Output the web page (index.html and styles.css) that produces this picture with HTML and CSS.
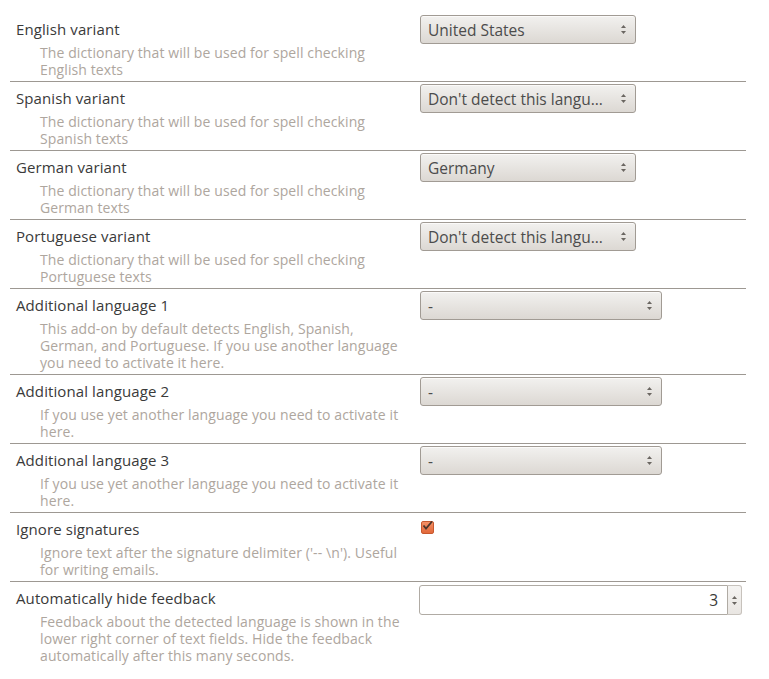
FILE: index.html
```html
<!DOCTYPE html>
<html lang="en">
<head>
<meta charset="utf-8">
<title>Language preferences</title>
<link rel="stylesheet" href="styles.css">
</head>
<body>
<div class="prefs">

  <div class="row">
    <div class="label">
      <div class="title">English variant</div>
      <div class="desc">The dictionary that will be used for spell checking English texts</div>
    </div>
    <div class="control">
      <div class="select">
        <span class="value">United States</span>
        <svg class="arrows" width="7" height="11" viewBox="0 0 7 11"><path d="M3.5 1 L6 4 L1 4 Z"/><path d="M1 7 L6 7 L3.5 10 Z"/></svg>
      </div>
    </div>
  </div>

  <div class="row">
    <div class="label">
      <div class="title">Spanish variant</div>
      <div class="desc">The dictionary that will be used for spell checking Spanish texts</div>
    </div>
    <div class="control">
      <div class="select">
        <span class="value">Don't detect this langu…</span>
        <svg class="arrows" width="7" height="11" viewBox="0 0 7 11"><path d="M3.5 1 L6 4 L1 4 Z"/><path d="M1 7 L6 7 L3.5 10 Z"/></svg>
      </div>
    </div>
  </div>

  <div class="row">
    <div class="label">
      <div class="title">German variant</div>
      <div class="desc">The dictionary that will be used for spell checking German texts</div>
    </div>
    <div class="control">
      <div class="select">
        <span class="value">Germany</span>
        <svg class="arrows" width="7" height="11" viewBox="0 0 7 11"><path d="M3.5 1 L6 4 L1 4 Z"/><path d="M1 7 L6 7 L3.5 10 Z"/></svg>
      </div>
    </div>
  </div>

  <div class="row">
    <div class="label">
      <div class="title">Portuguese variant</div>
      <div class="desc">The dictionary that will be used for spell checking Portuguese texts</div>
    </div>
    <div class="control">
      <div class="select">
        <span class="value">Don't detect this langu…</span>
        <svg class="arrows" width="7" height="11" viewBox="0 0 7 11"><path d="M3.5 1 L6 4 L1 4 Z"/><path d="M1 7 L6 7 L3.5 10 Z"/></svg>
      </div>
    </div>
  </div>

  <div class="row">
    <div class="label">
      <div class="title">Additional language 1</div>
      <div class="desc">This add-on by default detects English, Spanish, German, and Portuguese. If you use another language you need to activate it here.</div>
    </div>
    <div class="control">
      <div class="select wide">
        <span class="value">-</span>
        <svg class="arrows" width="7" height="11" viewBox="0 0 7 11"><path d="M3.5 1 L6 4 L1 4 Z"/><path d="M1 7 L6 7 L3.5 10 Z"/></svg>
      </div>
    </div>
  </div>

  <div class="row">
    <div class="label">
      <div class="title">Additional language 2</div>
      <div class="desc">If you use yet another language you need to activate it here.</div>
    </div>
    <div class="control">
      <div class="select wide">
        <span class="value">-</span>
        <svg class="arrows" width="7" height="11" viewBox="0 0 7 11"><path d="M3.5 1 L6 4 L1 4 Z"/><path d="M1 7 L6 7 L3.5 10 Z"/></svg>
      </div>
    </div>
  </div>

  <div class="row">
    <div class="label">
      <div class="title">Additional language 3</div>
      <div class="desc">If you use yet another language you need to activate it here.</div>
    </div>
    <div class="control">
      <div class="select wide">
        <span class="value">-</span>
        <svg class="arrows" width="7" height="11" viewBox="0 0 7 11"><path d="M3.5 1 L6 4 L1 4 Z"/><path d="M1 7 L6 7 L3.5 10 Z"/></svg>
      </div>
    </div>
  </div>

  <div class="row">
    <div class="label">
      <div class="title">Ignore signatures</div>
      <div class="desc">Ignore text after the signature delimiter ('-- \n'). Useful for writing emails.</div>
    </div>
    <div class="control">
      <span class="checkbox">
        <svg width="13" height="12" viewBox="0 0 13 12"><path d="M2.5 5.5 L5 8.5 L11 1.5" fill="none" stroke="#4a352c" stroke-width="1.8"/></svg>
      </span>
    </div>
  </div>

  <div class="row last">
    <div class="label">
      <div class="title">Automatically hide feedback</div>
      <div class="desc">Feedback about the detected language is shown in the lower right corner of text fields. Hide the feedback automatically after this many seconds.</div>
    </div>
    <div class="control">
      <div class="number">
        <div class="num-field">3</div>
        <div class="spin">
          <svg width="7" height="11" viewBox="0 0 7 11"><path d="M3.5 1 L6 4 L1 4 Z"/><path d="M1 7 L6 7 L3.5 10 Z"/></svg>
        </div>
      </div>
    </div>
  </div>

</div>
</body>
</html>
```
FILE: styles.css
```css
html, body {
  margin: 0;
  padding: 0;
  background: #ffffff;
}

body {
  font-family: "Open Sans", "Noto Sans", "DejaVu Sans", sans-serif;
}

.prefs {
  width: 736px;
  padding: 13px 0 0 10px;
}

.row {
  display: grid;
  grid-template-columns: 404px 1fr;
  padding: 2px 0 3px 6px;
  border-bottom: 1px solid #9d9892;
}

.row.last {
  border-bottom: none;
}

.title {
  font-size: 15px;
  letter-spacing: 0.1px;
  line-height: 29px;
  color: #3a3a3a;
}

.desc {
  font-size: 14px;
  letter-spacing: 0.1px;
  line-height: 17px;
  color: #aea69e;
  padding-left: 24px;
  width: 368px;
}

.control {
  display: flex;
  align-items: flex-start;
}

.select {
  box-sizing: border-box;
  width: 216px;
  height: 29px;
  display: flex;
  align-items: center;
  justify-content: space-between;
  padding: 0 8px 0 7px;
  border: 1px solid #a19b94;
  border-radius: 3px;
  background: linear-gradient(#f2f1ef, #dcd8d3);
  box-shadow: inset 0 1px 0 #fbfaf9;
  color: #4c4c4c;
  font-size: 15.5px;
  white-space: nowrap;
}

.select.wide {
  width: 242px;
}

.select .value {
  overflow: hidden;
}

.arrows path,
.spin path {
  fill: #6a6661;
}

.checkbox {
  position: relative;
  box-sizing: border-box;
  width: 13px;
  height: 13px;
  margin: 6px 0 0 1px;
  border: 1px solid #c8582e;
  border-radius: 2px;
  background: linear-gradient(#f39066, #e2683a);
}

.checkbox svg {
  position: absolute;
  left: -1px;
  top: -2px;
}

.number {
  display: flex;
  margin-top: 1px;
  margin-left: -1px;
}

.num-field {
  box-sizing: border-box;
  width: 309px;
  height: 30px;
  border: 1px solid #b0aba4;
  border-radius: 3px 0 0 3px;
  background: #ffffff;
  text-align: right;
  padding-right: 9px;
  font-size: 15.5px;
  line-height: 28px;
  color: #3a3a3a;
}

.spin {
  box-sizing: border-box;
  width: 14px;
  height: 30px;
  border: 1px solid #c7c2bc;
  border-left: none;
  border-radius: 0 3px 3px 0;
  background: linear-gradient(#f5f4f2, #e9e6e2);
  display: flex;
  align-items: center;
  justify-content: center;
}
```
